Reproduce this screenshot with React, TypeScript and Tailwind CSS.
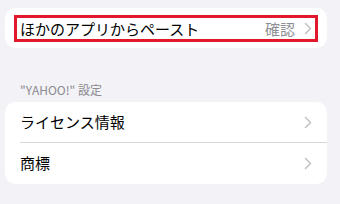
const FONT = '"Noto Sans CJK JP", "Noto Sans", sans-serif';

function Chevron() {
  return (
    <svg width="8" height="13" viewBox="0 0 8 13" fill="none" className="shrink-0">
      <path d="M1.5 1.5 L6.5 6.5 L1.5 11.5" stroke="#c4c4c7" strokeWidth="1.6" strokeLinecap="round" strokeLinejoin="round" />
    </svg>
  );
}

function Row({ label, last }: { label: string; last?: boolean }) {
  return (
    <div className="h-[41px] flex items-center pl-[15px] relative">
      <div className="flex-1 flex items-center pr-[15px] h-full">
        <span className="flex-1 text-[15px] text-black">{label}</span>
        <Chevron />
      </div>
      {!last && <div className="absolute left-[15px] right-0 bottom-0 h-px bg-[#d8d8dc]" />}
    </div>
  );
}

export default function App() {
  return (
    <div className="w-[340px] h-[204px] bg-[#f2f2f7] pt-[8px] pl-[5px] pr-[13px]" style={{ fontFamily: FONT }}>
      <div className="h-[40px] rounded-[10px] bg-white flex items-center px-[9px]">
        <div className="h-[27px] w-full border-[3px] border-[#e2192c] flex items-center pl-[3px] pr-[3px]">
          <span className="flex-1 text-[15px] text-black leading-none">ほかのアプリからペースト</span>
          <span className="text-[15px] text-[#8e8e93] leading-none mr-[9px]">確認</span>
          <Chevron />
        </div>
      </div>
      <div className="mt-[34px] mb-[4px] pl-[15px] h-[16px] text-[12px] leading-[16px] text-[#8a8a8e]">"YAHOO!" 設定</div>
      <div className="rounded-[10px] bg-white overflow-hidden">
        <Row label="ライセンス情報" />
        <Row label="商標" last />
      </div>
    </div>
  );
}
